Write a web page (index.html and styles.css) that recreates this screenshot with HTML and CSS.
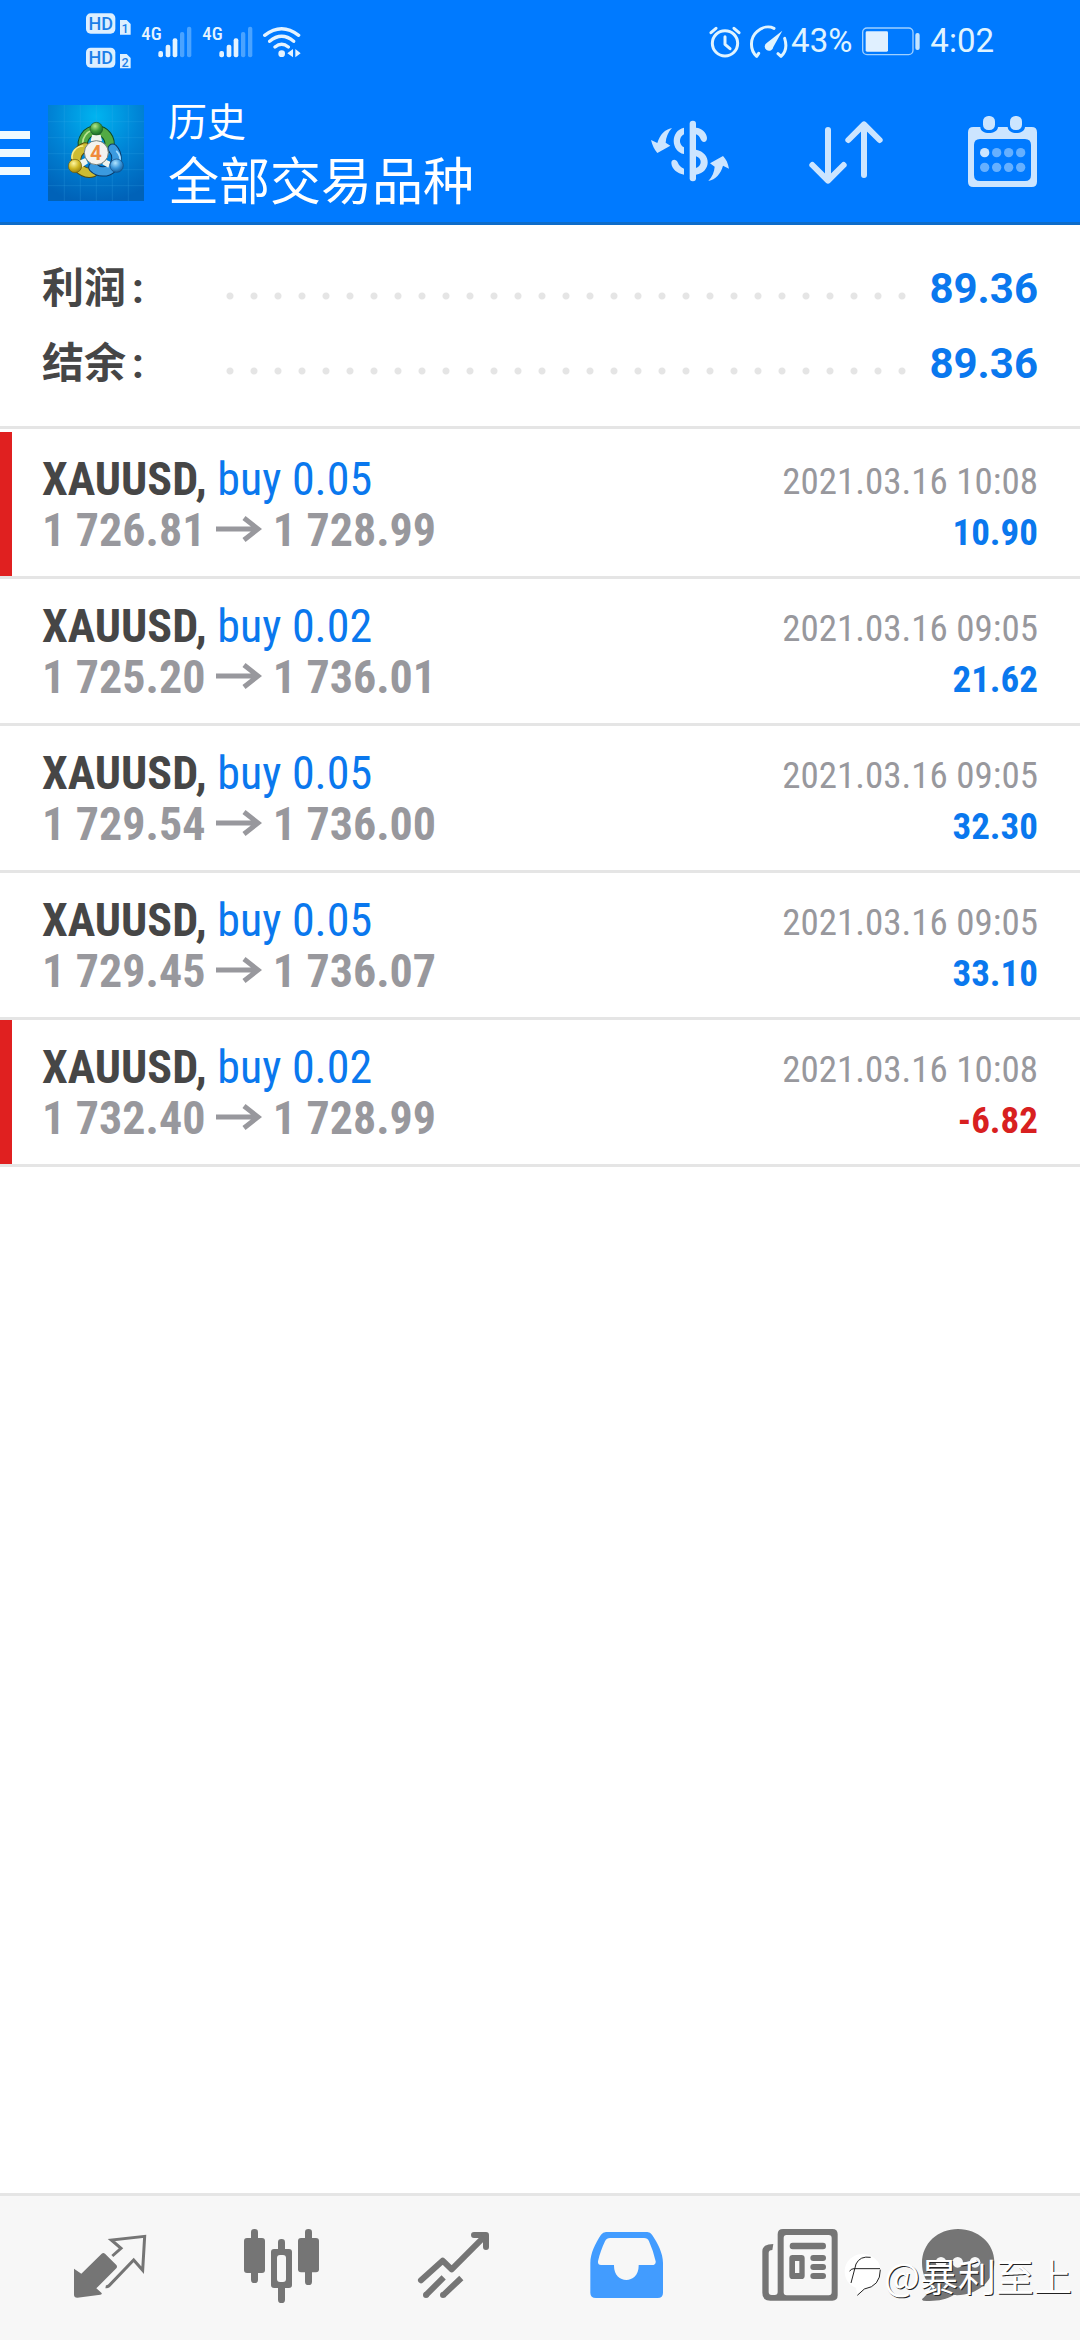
FILE: index.html
```
<!DOCTYPE html>
<html lang="zh-CN">
<head>
<meta charset="utf-8">
<meta name="viewport" content="width=device-width, initial-scale=1">
<title>历史</title>
<link rel="stylesheet" href="styles.css">
</head>
<body>
<header class="top">
  <div class="status">
    <div class="status-group">
      <svg class="hd" viewBox="258 36 138 174" width="46" height="58" aria-hidden="true">
        <g fill="#dcefff"><rect x="258" y="40" width="88" height="61" rx="14"/><rect x="258" y="143" width="88" height="60" rx="14"/><path d="M360 60h20l12 12v32h-32zM360 162h20l12 12v31h-32z"/></g>
        <g class="hd-text"><text x="302" y="90" text-anchor="middle" font-size="54">HD</text><text x="302" y="192" text-anchor="middle" font-size="54">HD</text><text x="375" y="99" text-anchor="middle" font-size="38">1</text><text x="375" y="200" text-anchor="middle" font-size="38">2</text></g>
      </svg>
      <svg class="cell" viewBox="423 66 156 102" width="52" height="34" aria-hidden="true">
        <text class="net" x="424" y="115" font-size="56">4G</text>
        <g fill="#e4f3ff"><rect x="475" y="147" width="14" height="19" rx="6"/><rect x="497" y="128" width="14" height="38" rx="6"/><rect x="518" y="109" width="14" height="57" rx="6"/></g>
        <g fill="#4aa3ff"><rect x="540" y="90" width="13" height="76" rx="6"/><rect x="561" y="74" width="13" height="92" rx="6"/></g>
      </svg>
      <svg class="cell" viewBox="423 66 156 102" width="52" height="34" aria-hidden="true">
        <text class="net" x="424" y="115" font-size="56">4G</text>
        <g fill="#e4f3ff"><rect x="475" y="147" width="14" height="19" rx="6"/><rect x="497" y="128" width="14" height="38" rx="6"/><rect x="518" y="109" width="14" height="57" rx="6"/></g>
        <g fill="#4aa3ff"><rect x="540" y="90" width="13" height="76" rx="6"/><rect x="561" y="74" width="13" height="92" rx="6"/></g>
      </svg>
      <svg viewBox="783 66 117 102" width="39" height="34" aria-hidden="true">
        <g fill="none" stroke="#e4f3ff" stroke-width="10" stroke-linecap="round"><path d="M788 100Q839 60 890 100M803 118Q839 88 875 118M819 135Q839 119 859 135"/></g>
        <circle cx="839" cy="155" r="10" fill="#e4f3ff"/><path d="M873 141v25l-17-12zM880 141v25l16-12z" fill="#e4f3ff"/>
      </svg>
    </div>
    <div class="status-group status-right">
      <svg viewBox="204 66 240 105" width="80" height="35" aria-hidden="true">
        <g fill="none" stroke="#e0f4ff" stroke-width="9" stroke-linecap="round" stroke-linejoin="round"><circle cx="252" cy="124" r="38"/><path d="M252 104v23l15 13M210 92l15-13M294 92l-15-13"/>
        <path d="M353 154l-6 9C326 144 326 108 348 89C364 74 384 72 399 79M411 155l9 8C437 148 437 128 431 109"/></g>
        <path d="M424 86L397 135A13 13 0 1 1 378 122z" fill="#e0f4ff"/>
      </svg>
      <span class="status-text">43%</span>
      <svg class="battery" viewBox="666 78 174 87" width="58" height="29" aria-hidden="true">
        <rect x="668" y="81" width="151" height="80" rx="13" fill="none" stroke="#9fd0ff" stroke-width="4"/><rect x="677" y="91" width="67" height="61" rx="4" fill="#e0f0ff"/><rect x="826" y="96" width="13" height="51" rx="6" fill="#c4e4ff"/>
      </svg>
      <span class="status-text">4:02</span>
    </div>
  </div>
  <div class="toolbar">
    <button class="menu" type="button" aria-label="菜单"><span class="bar"></span><span class="bar"></span><span class="bar"></span></button>
    <svg class="app-icon" viewBox="144 315 288 288" aria-hidden="true">
      <defs>
        <radialGradient id="sky" cx=".5" cy=".12" r=".9"><stop offset="0" stop-color="#00b4f0"/><stop offset=".5" stop-color="#0084d6"/><stop offset="1" stop-color="#0062b8"/></radialGradient>
        <radialGradient id="green" cx=".4" cy=".3" r=".8"><stop offset="0" stop-color="#b5e88a"/><stop offset=".5" stop-color="#3d9a3c"/><stop offset="1" stop-color="#0f5c25"/></radialGradient>
        <radialGradient id="yellow" cx=".4" cy=".3" r=".8"><stop offset="0" stop-color="#fff7a0"/><stop offset=".5" stop-color="#d0b824"/><stop offset="1" stop-color="#887008"/></radialGradient>
        <radialGradient id="blue" cx=".4" cy=".3" r=".8"><stop offset="0" stop-color="#b0e4ff"/><stop offset=".5" stop-color="#3a96da"/><stop offset="1" stop-color="#0a508e"/></radialGradient>
      </defs>
      <rect x="144" y="315" width="288" height="288" fill="url(#sky)"/>
      <path d="M193 315v288M241 315v288M289 315v288M337 315v288M385 315v288M144 365h288M144 413h288M144 461h288M144 509h288M144 557h288" stroke="#3fb5ee" stroke-opacity=".3" stroke-width="2"/>
      <g fill="none" stroke-linecap="round">
        <path d="M251 445A40 40 0 1 1 327 443" stroke="#0d4a26" stroke-width="31"/><path d="M251 445A40 40 0 1 1 327 443" stroke="#52aa44" stroke-width="25"/><path d="M248 430A41 41 0 0 1 276 391" stroke="#b9e491" stroke-width="5"/>
        <path d="M255 442A39 39 0 1 0 280 516" stroke="#554b0d" stroke-width="31"/><path d="M255 442A39 39 0 1 0 280 516" stroke="#cdbc32" stroke-width="25"/><path d="M216 475A34 34 0 0 1 248 438" stroke="#f7ee8c" stroke-width="5"/>
        <path d="M338 446A40 40 0 1 1 280 502" stroke="#0c3a68" stroke-width="31"/><path d="M338 446A40 40 0 1 1 280 502" stroke="#3b9adf" stroke-width="25"/><path d="M350 454A34 34 0 0 1 358 490" stroke="#a4dcff" stroke-width="5"/>
      </g>
      <path d="M276 405h26l4 18h-34zM238 482l18-8 8 16-18 12zM331 485l-18-8-6 16 18 10z" fill="#eef4ee"/>
      <circle cx="289" cy="386" r="19" fill="url(#green)" stroke="#1b5629" stroke-width="2"/><circle cx="225" cy="498" r="20" fill="url(#yellow)" stroke="#6a5b10" stroke-width="2"/><circle cx="350" cy="497" r="20" fill="url(#blue)" stroke="#134a80" stroke-width="2"/>
      <circle cx="289" cy="458" r="36" fill="#f3f2ee" stroke="#75817c" stroke-width="3"/>
      <text class="app-number" x="288" y="480" text-anchor="middle">4</text>
    </svg>
    <div class="titles"><span class="title-small">历史</span><h1 class="title-main">全部交易品种</h1></div>
    <button class="action" type="button" aria-label="货币">
      <svg viewBox="6 315 288 288" aria-hidden="true"><g fill="#cce5ff"><rect x="149" y="362" width="19" height="182" rx="9"/><path d="M132 383v20c-16 8-16 32 0 39v20c-40-8-42-70 0-79zM168 383c17 1 32 14 33 31 0 15-15 15-19 4-3-8-7-12-14-15zM168 449c47 9 47 67 0 75v-20c19-6 19-30 0-35zM94 489c0-12 15-13 19-2 3 9 9 15 19 19v18c-20-3-37-17-38-35zM96 384C84 397 78 412 77 428l14 9-39 22c-9-10-15-23-19-39l19 9c8-26 23-41 44-45zM205 543c12-13 18-28 19-43l-14-10 39-22c10 10 15 22 18 38l-18-9c-7 25-22 41-44 46z"/></g></svg>
    </button>
    <button class="action" type="button" aria-label="排序">
      <svg viewBox="474 315 288 288" aria-hidden="true"><path d="M564 390v151M517 495l47 47 47-47M672 525V374M625 420l47-47 47 47" fill="none" stroke="#cce5ff" stroke-width="18" stroke-linecap="round" stroke-linejoin="round"/></svg>
    </button>
    <button class="action" type="button" aria-label="日期">
      <svg viewBox="942 315 288 288" aria-hidden="true"><path fill="#cce5ff" fill-rule="evenodd" d="M1000 381h21c0 24 51 24 53 0h29c2 24 50 24 52 0h20q16 0 16 16v148q0 16-16 16h-175q-16 0-16-16V397q0-16 16-16zm20 36q-18 0-18 18v90q0 18 18 18h135q18 0 18-18v-90q0-18-18-18z"/><g fill="#cce5ff"><rect x="1029" y="348" width="36" height="42" rx="16"/><rect x="1110" y="348" width="36" height="42" rx="16"/><circle cx="1034" cy="458" r="14"/></g><g fill="#66b0ff"><circle cx="1070" cy="458" r="14"/><circle cx="1106" cy="458" r="14"/><circle cx="1142" cy="458" r="14"/><circle cx="1034" cy="502" r="14"/><circle cx="1070" cy="502" r="14"/><circle cx="1106" cy="502" r="14"/><circle cx="1142" cy="502" r="14"/></g></svg>
    </button>
  </div>
</header>

<main class="content">
  <dl class="summary">
    <div class="summary-row"><dt class="summary-label"><span>利润</span><span>:</span></dt><dd class="summary-value">89.36</dd></div>
    <div class="summary-row"><dt class="summary-label"><span>结余</span><span>:</span></dt><dd class="summary-value">89.36</dd></div>
  </dl>
  <ul class="deals">
    <li class="deal deal-marked">
      <div class="deal-main"><div class="line"><b class="symbol">XAUUSD,</b> <span class="side">buy 0.05</span></div><div class="line prices">1 726.81 <svg class="arrow" viewBox="0 0 46 26" role="img" aria-label="至"><path d="M0 13h42M28 2l14 11-14 11"/></svg> 1 728.99</div></div>
      <div class="deal-info"><time class="line">2021.03.16 10:08</time><b class="line profit">10.90</b></div>
    </li>
    <li class="deal">
      <div class="deal-main"><div class="line"><b class="symbol">XAUUSD,</b> <span class="side">buy 0.02</span></div><div class="line prices">1 725.20 <svg class="arrow" viewBox="0 0 46 26" role="img" aria-label="至"><path d="M0 13h42M28 2l14 11-14 11"/></svg> 1 736.01</div></div>
      <div class="deal-info"><time class="line">2021.03.16 09:05</time><b class="line profit">21.62</b></div>
    </li>
    <li class="deal">
      <div class="deal-main"><div class="line"><b class="symbol">XAUUSD,</b> <span class="side">buy 0.05</span></div><div class="line prices">1 729.54 <svg class="arrow" viewBox="0 0 46 26" role="img" aria-label="至"><path d="M0 13h42M28 2l14 11-14 11"/></svg> 1 736.00</div></div>
      <div class="deal-info"><time class="line">2021.03.16 09:05</time><b class="line profit">32.30</b></div>
    </li>
    <li class="deal">
      <div class="deal-main"><div class="line"><b class="symbol">XAUUSD,</b> <span class="side">buy 0.05</span></div><div class="line prices">1 729.45 <svg class="arrow" viewBox="0 0 46 26" role="img" aria-label="至"><path d="M0 13h42M28 2l14 11-14 11"/></svg> 1 736.07</div></div>
      <div class="deal-info"><time class="line">2021.03.16 09:05</time><b class="line profit">33.10</b></div>
    </li>
    <li class="deal deal-marked">
      <div class="deal-main"><div class="line"><b class="symbol">XAUUSD,</b> <span class="side">buy 0.02</span></div><div class="line prices">1 732.40 <svg class="arrow" viewBox="0 0 46 26" role="img" aria-label="至"><path d="M0 13h42M28 2l14 11-14 11"/></svg> 1 728.99</div></div>
      <div class="deal-info"><time class="line">2021.03.16 10:08</time><b class="line profit loss">-6.82</b></div>
    </li>
  </ul>
</main>

<nav class="tabs">
  <a class="tab" href="#quotes" aria-label="行情"><svg viewBox="186 48 288 432"><path d="M222 266l22 15 61-60q5-4 10 0l34 34q4 5 0 10l-60 60 15 13q4 5-3 6l-69 9q-10 0-10-9z"/><path d="M337 228l26-23-29-25 100-11-6 102-27-31-75 78q-4 3-9 2" fill="none" stroke="#757575" stroke-width="9"/></svg></a>
  <a class="tab" href="#charts" aria-label="图表"><svg viewBox="702 48 288 432"><rect x="753" y="147" width="21" height="162" rx="10"/><rect x="732" y="174" width="63" height="105" rx="9"/><rect x="915" y="147" width="21" height="168" rx="10"/><rect x="894" y="174" width="63" height="103" rx="9"/><rect x="834" y="177" width="21" height="192" rx="10"/><rect x="813" y="207" width="63" height="117" rx="9"/><rect x="831" y="225" width="27" height="81" rx="9" fill="#f7f7f7"/></svg></a>
  <a class="tab" href="#trade" aria-label="交易"><svg viewBox="138 48 288 432"><g fill="none" stroke="#757575" stroke-width="18" stroke-linejoin="round"><path d="M183 301l65-59 27 26 98-98M342 165h36v36" stroke-linecap="round"/><path d="M251 292l-54 54M304 294l-55 52"/></g><path d="M360 160h24v28z"/><circle cx="198" cy="345" r="9"/><circle cx="249" cy="345" r="9"/></svg></a>
  <a class="tab tab-active" href="#history" aria-label="历史" aria-current="page"><svg viewBox="654 48 288 432"><path fill-rule="evenodd" d="M738 156h124q9 0 14 8c17 25 33 55 33 85v89q0 16-16 16H708q-17 0-17-16v-89c0-30 15-59 32-85q6-8 15-8zm12 18q-10 0-15 10c-9 19-16 39-21 60q-1 11 9 11h39c-2 60 76 60 74 0h40q12 0 11-11-7-31-20-60-4-10-15-10z"/></svg></a>
  <a class="tab" href="#news" aria-label="新闻"><svg viewBox="90 48 288 432"><path fill-rule="evenodd" d="M189 147h148q16 0 16 16v183q0 16-16 16H151q-24 0-24-24V214q0-22 33-22l-3 18q-11 0-11 9v117q0 9 9 9h9q9 0 9-9V163q0-16 16-16zm10 18q-8 0-8 9v163q0 9 9 9h126q9 0 9-9V174q0-9-9-9zM218 188h91q9 0 9 10t-9 10h-91q-9 0-9-10t9-10zM218 225h26q10 0 10 10v52q0 10-10 10h-26q-10 0-10-10v-52q0-10 10-10zm7 18v36h13v-36z"/><rect x="271" y="225" width="47" height="18" rx="9"/><rect x="271" y="252" width="47" height="18" rx="9"/><rect x="271" y="279" width="47" height="18" rx="9"/></svg></a>
  <a class="tab" href="#mail" aria-label="消息"><svg viewBox="606 48 288 432"><path d="M714 147c60 0 109 43 109 99 0 62-59 104-122 99-25 15-55 20-91 17q-8-3 0-8 15-12 24-32c-18-20-28-44-28-73 0-59 48-102 108-102z"/><g fill="#f7f7f7"><circle cx="663" cy="247" r="16"/><circle cx="713" cy="247" r="16"/><circle cx="765" cy="247" r="16"/></g></svg></a>
  <div class="watermark"><svg viewBox="364 242 114 132" width="38" height="44" aria-hidden="true"><path d="M366 297C366 268 390 245 420 245C451 245 474 268 474 294C474 324 452 346 425 350L404 367L400 346C380 340 366 322 366 297z" fill="#fff"/><path d="M385 332L400 275Q412 250 444 255M381 297Q384 289 394 289H472M473 292q0 50-48 58l-21 19" fill="none" stroke="#222" stroke-width="3"/></svg><span>@暴利至上</span></div>
</nav>
</body>
</html>
```
FILE: styles.css
```
* { box-sizing: border-box; }

body {
  margin: 0;
  min-height: 100vh;
  display: flex;
  flex-direction: column;
  background: #fff;
  color: #464646;
  font-family: Roboto, "Noto Sans CJK SC", sans-serif;
}

button {
  padding: 0;
  border: 0;
  background: none;
}

svg { display: block; flex: none; }

/* Header */
.top {
  background: #007aff;
  border-bottom: 3px solid #0e6cc9;
  color: #fff;
}

.status {
  height: 82px;
  padding: 0 86px;
  display: flex;
  justify-content: space-between;
}

.status-group {
  display: flex;
  align-items: center;
  gap: 9px;
}

.status-right { gap: 2px; }

.battery { margin: 0 8px; }

.status-text {
  font-size: 33px;
  line-height: 40px;
  color: #e0f4ff;
}

.hd-text {
  fill: #1c7fe8;
  font-family: Roboto, sans-serif;
  font-weight: 500;
}

.net {
  fill: #e4f3ff;
  font-family: "Roboto Condensed", "Liberation Sans Narrow", sans-serif;
  font-weight: 500;
}

.toolbar {
  height: 140px;
  padding-top: 2px;
  display: flex;
  align-items: center;
}

.menu {
  width: 30px;
  margin-right: 18px;
  display: flex;
  flex-direction: column;
  gap: 10px;
}

.bar {
  width: 30px;
  height: 8px;
  background: #f0faff;
}

.app-icon { width: 96px; height: 96px; }

.app-number {
  fill: #f08a3c;
  font-family: Roboto, sans-serif;
  font-size: 62px;
  font-weight: 700;
}

.titles {
  flex: 1;
  margin-left: 24px;
  display: flex;
  flex-direction: column;
}

.title-small {
  font-size: 39px;
  line-height: 60px;
}

.title-main {
  margin: 0;
  font-size: 51px;
  font-weight: 400;
  line-height: 60px;
}

.action {
  width: 156px;
  height: 138px;
  display: flex;
  align-items: center;
  justify-content: center;
}

.action svg { width: 96px; height: 96px; }

/* Totals */
.summary {
  margin: 0 0 3px;
  padding: 26px 42px 25px;
  border-bottom: 3px solid #e5e5e5;
  font-size: 42px;
  font-weight: 700;
  line-height: 75px;
}

.summary-row { display: flex; align-items: center; }

.summary-label {
  width: 176px;
  display: flex;
  align-items: baseline;
  gap: 6px;
}

.summary-row::before {
  content: "";
  order: 1;
  flex: 1;
  height: 24px;
  margin-top: 14px;
  margin-right: 16px;
  background: radial-gradient(circle, #e5e5e5 3px, transparent 4px) 0 0 / 24px 24px;
}

.summary-value {
  order: 2;
  margin: 0;
  color: #0a78ee;
}

/* Deals */
.deals {
  margin: 0;
  padding: 0;
  list-style: none;
}

.deal {
  display: flex;
  justify-content: space-between;
  padding: 22px 42px 18px;
  border-bottom: 3px solid #e5e5e5;
  font-family: "Roboto Condensed", "Liberation Sans Narrow", Roboto, sans-serif;
  font-size: 46px;
}

.deal-marked { box-shadow: inset 12px 0 #e02020; }

.line {
  display: block;
  line-height: 51px;
  white-space: nowrap;
}

.side { color: #0a78ee; }

.prices { color: #98989d; font-weight: 700; }

.arrow {
  display: inline-block;
  width: 46px;
  height: 26px;
  vertical-align: 4px;
  fill: none;
  stroke: #98989d;
  stroke-width: 5px;
}

.deal-info {
  padding-top: 2px;
  font-size: 37px;
  text-align: right;
  color: #98989d;
}

.profit { color: #0a78ee; }

.loss { color: #d82020; }

/* Bottom tabs */
.tabs {
  position: sticky;
  bottom: 0;
  margin-top: auto;
  padding: 0 24px;
  display: flex;
  border-top: 3px solid #e5e5e5;
  background: #f7f7f7;
}

.tab {
  flex: 1;
  display: flex;
  justify-content: center;
  fill: #757575;
}

.tab svg { width: 96px; height: 144px; }

.tab-active { fill: #429cff; }

.watermark {
  position: absolute;
  right: 8px;
  bottom: 38px;
  display: flex;
  align-items: center;
  gap: 2px;
  color: #fff;
  font-family: "Noto Sans CJK SC", sans-serif;
  font-size: 38px;
  line-height: 54px;
  text-shadow: 1px 1px 0 #222;
}
```
